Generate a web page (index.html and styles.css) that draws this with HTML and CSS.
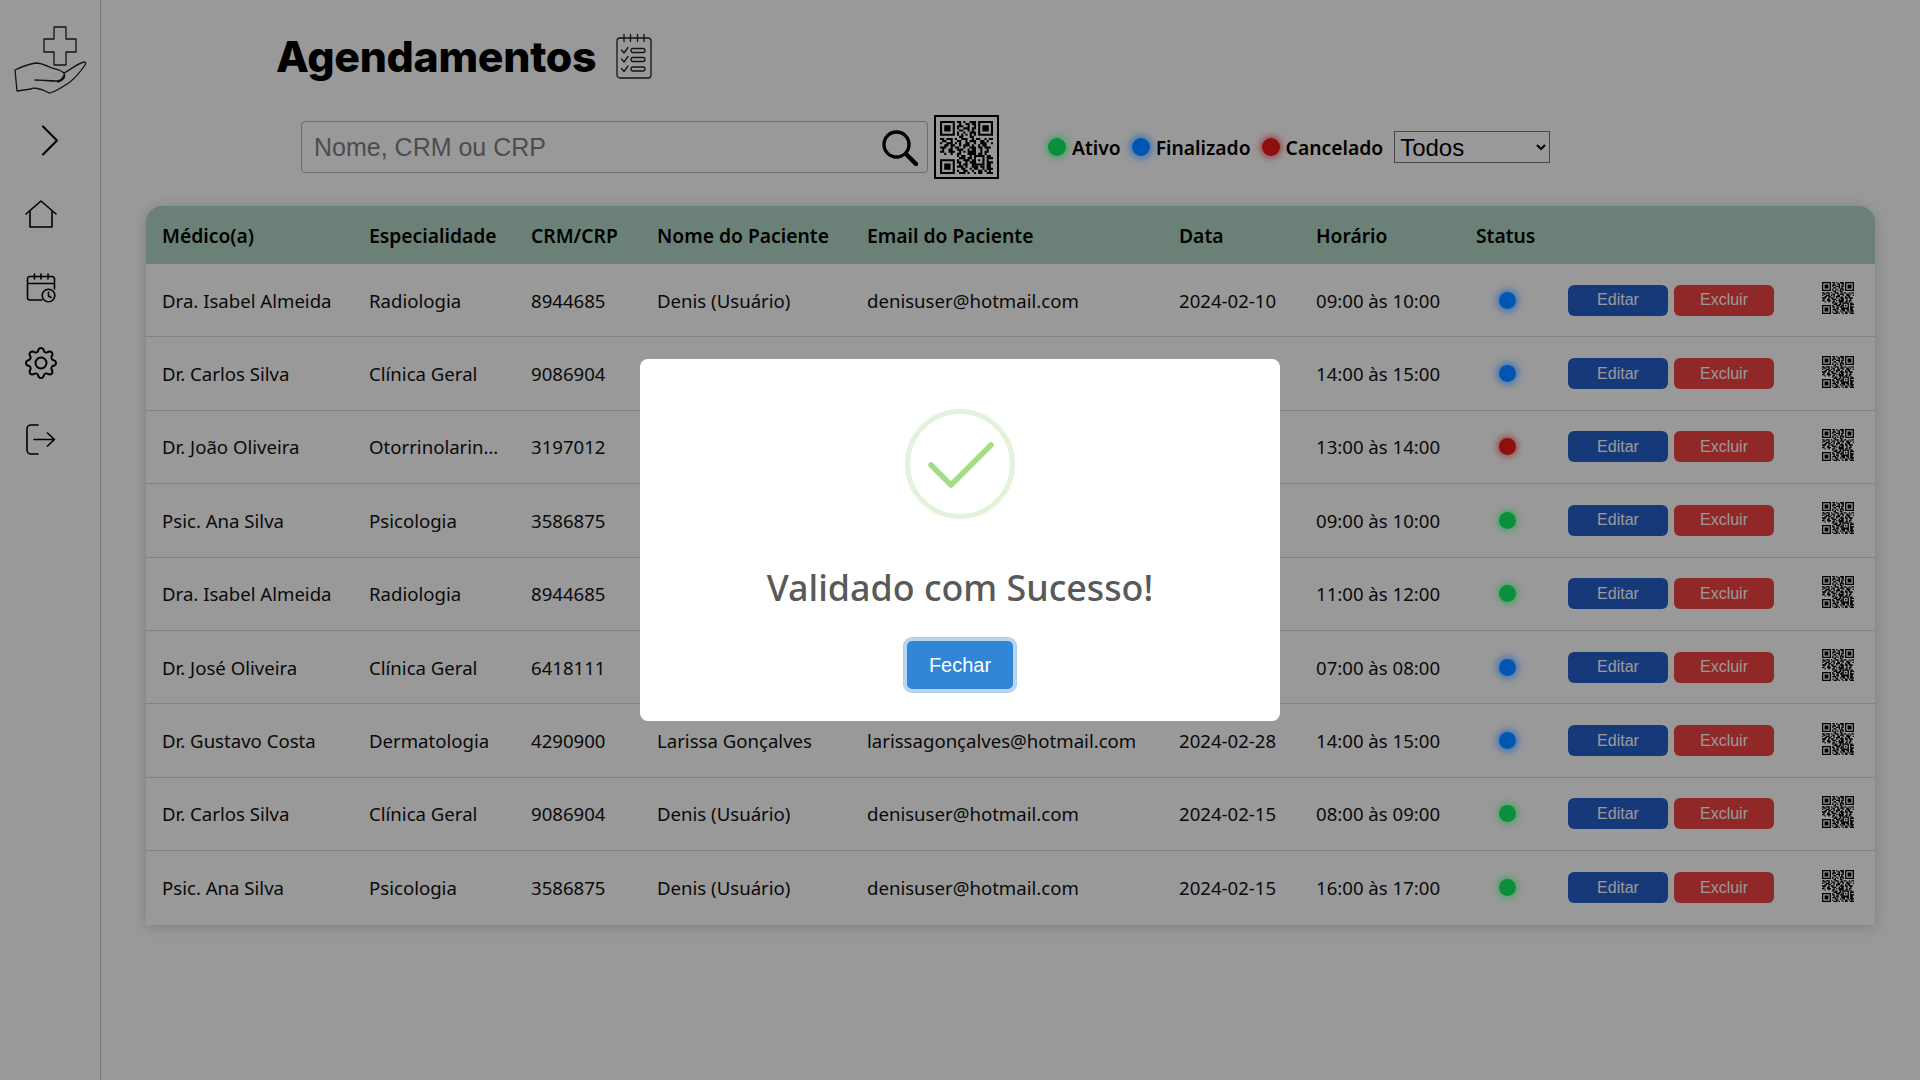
FILE: index.html
```html
<!DOCTYPE html>
<html lang="pt-BR">
<head>
<meta charset="utf-8">
<title>Agendamentos</title>
<link rel="stylesheet" href="styles.css">
</head>
<body>
<svg class="defs" width="0" height="0" aria-hidden="true">
  <symbol id="qr" viewBox="0 0 25 25">
    <path fill="#000" fill-rule="evenodd" d="M0 0h7v7H0zM1 1v5h5V1zM2 2h3v3H2zM18 0h7v7h-7zM19 1v5h5V1zM20 2h3v3h-3zM0 18h7v7H0zM1 19v5h5v-5zM2 20h3v3H2zM16 16h5v5h-5zM17 17v3h3v-3zM18 18h1v1h-1z"/>
    <path fill="none" stroke="#000" stroke-width="1" d="M8 .5h2m1 0h1m2 0h3M9 1.5h1m2 0h2m1 0h2M8 2.5h3m2 0h1m2 0h1M8 3.5h1m2 0h3m1 0h2M9 4.5h2m2 0h1m1 0h1M8 5.5h1m2 0h1m2 0h3M8 6.5h1m1 0h1m1 0h1m1 0h1m1 0h1M9 7.5h2m3 0h2M0 8.5h2m1 0h3m1 0h1m2 0h3m2 0h1m1 0h2m2 0h1m1 0h2M1 9.5h2m2 0h1m2 0h2m2 0h1m1 0h3m2 0h2m1 0h1M0 10.5h1m2 0h3m1 0h1m1 0h1m2 0h2m2 0h1m2 0h3m2 0h1M2 11.5h2m1 0h2m2 0h1m1 0h3m1 0h1m2 0h1m1 0h2M0 12.5h3m2 0h1m1 0h2m2 0h1m2 0h3m1 0h2m1 0h3M1 13.5h1m2 0h2m2 0h3m2 0h1m1 0h2m2 0h1m2 0h1M0 14.5h2m2 0h3m2 0h1m1 0h1m1 0h4m2 0h1m1 0h2M2 15.5h1m2 0h1m2 0h2m3 0h4m1 0h2m1 0h1M8 16.5h1m1 0h2m2 0h1m7 0h2M9 17.5h3m1 0h2m7 0h3M8 18.5h1m2 0h3m1 0h1m6 0h1M8 19.5h2m2 0h1m1 0h2m6 0h3M9 20.5h1m1 0h2m2 0h1m6 0h2M8 21.5h3m1 0h1m2 0h3m1 0h2m1 0h2M10 22.5h2m2 0h1m1 0h2m2 0h1m1 0h3M8 23.5h1m2 0h2m2 0h1m2 0h2m1 0h1m1 0h1M9 24.5h3m1 0h1m2 0h1m1 0h2m2 0h3"/>
  </symbol>
</svg>

<div class="app">
  <aside class="sidebar">
    <svg class="logo" width="76" height="68" viewBox="0 0 76 68" fill="none" stroke="#222" stroke-width="1.300" stroke-linejoin="round" stroke-linecap="round">
      <path d="M41 1h12v12h10v13H53v13H41V26H31V13h10z"/>
      <path d="M2 44C8 41 16 38 23 37c6 0 11 3 16 5 4 1 9 2 12 5 6-3 14-10 20-11 2 0 2 2 1 3-4 6-9 12-15 17-6 4-13 9-20 11-2 0-3-1-5-2-4-2-12-4-14-2L4 65z"/>
      <path d="M22 54c7 0 14 1 21 1 4 0 7-3 8-6M51 47c2 4-1 8-6 9"/>
    </svg>
    <svg class="chevron" width="18" height="31" viewBox="0 0 18 31" fill="none" stroke="#000" stroke-width="2" stroke-linecap="round" stroke-linejoin="round"><path d="M2 1.500 16 15.500 2 29.500"/></svg>
    <nav class="nav">
      <svg width="32" height="28" viewBox="0 0 32 28" fill="none" stroke="#000" stroke-width="1.600" stroke-linecap="round" stroke-linejoin="round"><path d="M1 14 16 1l15 13M5 11v16h22V11"/></svg>
      <svg width="30" height="30" viewBox="0 0 30 30" fill="none" stroke="#000" stroke-width="1.600" stroke-linecap="round" stroke-linejoin="round"><path d="M16 27H4a2.500 2.500 0 0 1-2.500-2.500V6A2.500 2.500 0 0 1 4 3.500h22A2.500 2.500 0 0 1 28.500 6v10M1.500 10.500h27M8.500 1v5M15 1v5M22 1v5"/><circle cx="22.500" cy="22.500" r="6.300"/><path d="M22.500 19v4l2.500 1.500"/></svg>
      <svg width="32" height="32" viewBox="0 0 16 16" fill="#000"><path d="M8 4.754a3.246 3.246 0 1 0 0 6.492 3.246 3.246 0 0 0 0-6.492zM5.754 8a2.246 2.246 0 1 1 4.492 0 2.246 2.246 0 0 1-4.492 0z"/><path d="M9.796 1.343c-.527-1.790-3.065-1.790-3.592 0l-.094.319a.873.873 0 0 1-1.255.52l-.292-.16c-1.640-.892-3.433.902-2.540 2.541l.159.292a.873.873 0 0 1-.52 1.255l-.319.094c-1.790.527-1.790 3.065 0 3.592l.319.094a.873.873 0 0 1 .52 1.255l-.16.292c-.892 1.640.901 3.434 2.541 2.540l.292-.159a.873.873 0 0 1 1.255.52l.094.319c.527 1.790 3.065 1.790 3.592 0l.094-.319a.873.873 0 0 1 1.255-.52l.292.16c1.640.893 3.434-.902 2.540-2.541l-.159-.292a.873.873 0 0 1 .52-1.255l.319-.094c1.790-.527 1.790-3.065 0-3.592l-.319-.094a.873.873 0 0 1-.52-1.255l.16-.292c.893-1.640-.902-3.433-2.541-2.540l-.292.159a.873.873 0 0 1-1.255-.52l-.094-.319zm-2.633.283c.246-.835 1.428-.835 1.674 0l.094.319a1.873 1.873 0 0 0 2.693 1.115l.291-.16c.764-.415 1.600.42 1.184 1.185l-.159.292a1.873 1.873 0 0 0 1.116 2.692l.318.094c.835.246.835 1.428 0 1.674l-.319.094a1.873 1.873 0 0 0-1.115 2.693l.16.291c.415.764-.42 1.600-1.185 1.184l-.291-.159a1.873 1.873 0 0 0-2.693 1.116l-.094.318c-.246.835-1.428.835-1.674 0l-.094-.319a1.873 1.873 0 0 0-2.692-1.115l-.292.16c-.764.415-1.600-.42-1.184-1.185l.159-.291A1.873 1.873 0 0 0 1.945 8.930l-.319-.094c-.835-.246-.835-1.428 0-1.674l.319-.094A1.873 1.873 0 0 0 3.060 4.377l-.16-.292c-.415-.764.42-1.600 1.185-1.184l.292.159a1.873 1.873 0 0 0 2.692-1.115l.094-.319z"/></svg>
      <svg width="30" height="31" viewBox="0 0 30 31" fill="none" stroke="#000" stroke-width="1.600" stroke-linecap="round" stroke-linejoin="round"><path d="M12 1H5a4 4 0 0 0-4 4v21a4 4 0 0 0 4 4h7M8 15.500h20.500M21.500 9l7 6.500-7 6.500"/></svg>
    </nav>
  </aside>

  <main class="main">
    <header class="title-row">
      <h1 class="title">Agendamentos</h1>
      <svg class="title-icon" width="36" height="46" viewBox="0 0 36 46" fill="none" stroke="#222" stroke-width="1.300" stroke-linecap="round" stroke-linejoin="round"><rect x="1" y="5" width="34" height="40" rx="3"/><path d="M8 1.500v7M14.500 1.500v7M21.500 1.500v7M28 1.500v7M5.500 17l2.500 3 4-5.500M5.500 26l2.500 3 4-5.500M5.500 35.500l2.500 3 4-5.500"/><rect x="15" y="15.500" width="14" height="4" rx="2"/><rect x="15" y="24.500" width="14" height="4" rx="2"/><rect x="15" y="34" width="14" height="4" rx="2"/></svg>
    </header>

    <section class="toolbar">
      <div class="search">
        <input class="search-input" type="text" placeholder="Nome, CRM ou CRP">
        <svg class="search-icon" width="36" height="36" viewBox="0 0 36 36" fill="none" stroke="#000" stroke-linecap="round"><circle cx="14.500" cy="14.500" r="12.500" stroke-width="3.400"/><path d="M24 24l10 10" stroke-width="4.400"/></svg>
      </div>
      <div class="qr-box"><svg width="53" height="53"><use href="#qr"/></svg></div>
      <div class="legend">
        <span class="legend-item"><i class="dot green"></i>Ativo</span>
        <span class="legend-item"><i class="dot blue"></i>Finalizado</span>
        <span class="legend-item"><i class="dot red"></i>Cancelado</span>
      </div>
      <select class="filter"><option>Todos</option></select>
    </section>

    <div class="table-card">
      <table class="table">
        <colgroup>
          <col class="c1"><col class="c2"><col class="c3"><col class="c4"><col class="c5">
          <col class="c6"><col class="c7"><col class="c8"><col class="c9"><col class="c10">
        </colgroup>
        <thead>
          <tr><th>Médico(a)</th><th>Especialidade</th><th>CRM/CRP</th><th>Nome do Paciente</th><th>Email do Paciente</th><th>Data</th><th>Horário</th><th>Status</th><th></th><th></th></tr>
        </thead>
        <tbody>
          <tr><td>Dra. Isabel Almeida</td><td>Radiologia</td><td>8944685</td><td>Denis (Usuário)</td><td>denisuser@hotmail.com</td><td>2024-02-10</td><td>09:00 às 10:00</td><td class="st"><i class="dot blue"></i></td><td class="act"><button class="btn edit">Editar</button><button class="btn del">Excluir</button></td><td class="q"><svg width="32" height="32"><use href="#qr"/></svg></td></tr>
          <tr><td>Dr. Carlos Silva</td><td>Clínica Geral</td><td>9086904</td><td>Denis (Usuário)</td><td>denisuser@hotmail.com</td><td>2024-02-12</td><td>14:00 às 15:00</td><td class="st"><i class="dot blue"></i></td><td class="act"><button class="btn edit">Editar</button><button class="btn del">Excluir</button></td><td class="q"><svg width="32" height="32"><use href="#qr"/></svg></td></tr>
          <tr><td>Dr. João Oliveira</td><td class="clip">Otorrinolaringologia</td><td>3197012</td><td>Denis (Usuário)</td><td>denisuser@hotmail.com</td><td>2024-02-14</td><td>13:00 às 14:00</td><td class="st"><i class="dot red"></i></td><td class="act"><button class="btn edit">Editar</button><button class="btn del">Excluir</button></td><td class="q"><svg width="32" height="32"><use href="#qr"/></svg></td></tr>
          <tr><td>Psic. Ana Silva</td><td>Psicologia</td><td>3586875</td><td>Denis (Usuário)</td><td>denisuser@hotmail.com</td><td>2024-02-15</td><td>09:00 às 10:00</td><td class="st"><i class="dot green"></i></td><td class="act"><button class="btn edit">Editar</button><button class="btn del">Excluir</button></td><td class="q"><svg width="32" height="32"><use href="#qr"/></svg></td></tr>
          <tr><td>Dra. Isabel Almeida</td><td>Radiologia</td><td>8944685</td><td>Denis (Usuário)</td><td>denisuser@hotmail.com</td><td>2024-02-15</td><td>11:00 às 12:00</td><td class="st"><i class="dot green"></i></td><td class="act"><button class="btn edit">Editar</button><button class="btn del">Excluir</button></td><td class="q"><svg width="32" height="32"><use href="#qr"/></svg></td></tr>
          <tr><td>Dr. José Oliveira</td><td>Clínica Geral</td><td>6418111</td><td>Denis (Usuário)</td><td>denisuser@hotmail.com</td><td>2024-02-20</td><td>07:00 às 08:00</td><td class="st"><i class="dot blue"></i></td><td class="act"><button class="btn edit">Editar</button><button class="btn del">Excluir</button></td><td class="q"><svg width="32" height="32"><use href="#qr"/></svg></td></tr>
          <tr><td>Dr. Gustavo Costa</td><td>Dermatologia</td><td>4290900</td><td>Larissa Gonçalves</td><td>larissagonçalves@hotmail.com</td><td>2024-02-28</td><td>14:00 às 15:00</td><td class="st"><i class="dot blue"></i></td><td class="act"><button class="btn edit">Editar</button><button class="btn del">Excluir</button></td><td class="q"><svg width="32" height="32"><use href="#qr"/></svg></td></tr>
          <tr><td>Dr. Carlos Silva</td><td>Clínica Geral</td><td>9086904</td><td>Denis (Usuário)</td><td>denisuser@hotmail.com</td><td>2024-02-15</td><td>08:00 às 09:00</td><td class="st"><i class="dot green"></i></td><td class="act"><button class="btn edit">Editar</button><button class="btn del">Excluir</button></td><td class="q"><svg width="32" height="32"><use href="#qr"/></svg></td></tr>
          <tr><td>Psic. Ana Silva</td><td>Psicologia</td><td>3586875</td><td>Denis (Usuário)</td><td>denisuser@hotmail.com</td><td>2024-02-15</td><td>16:00 às 17:00</td><td class="st"><i class="dot green"></i></td><td class="act"><button class="btn edit">Editar</button><button class="btn del">Excluir</button></td><td class="q"><svg width="32" height="32"><use href="#qr"/></svg></td></tr>
        </tbody>
      </table>
    </div>
  </main>
</div>

<div class="overlay">
  <div class="modal">
    <div class="success-icon">
      <svg width="110" height="110" viewBox="0 0 110 110" fill="none"><circle cx="55" cy="55" r="52.500" stroke="#e3f3d9" stroke-width="5"/><path d="M26 56l20 20 40-40" stroke="#a5dc86" stroke-width="5.500" stroke-linecap="round" stroke-linejoin="round"/></svg>
    </div>
    <h2 class="modal-title">Validado com Sucesso!</h2>
    <button class="modal-btn">Fechar</button>
  </div>
</div>
</body>
</html>
```
FILE: styles.css
```css
* { box-sizing: border-box; }
html, body { margin: 0; height: 100%; }
body { background: #fff; font-family: "Noto Sans", "Open Sans", sans-serif; color: #000; overflow: hidden; }
.defs { position: absolute; }
.app { display: flex; min-height: 1080px; }

.sidebar { width: 101px; flex: none; border-right: 1px solid #c4c4c4; display: flex; flex-direction: column; align-items: center; padding-top: 26px; }
.logo { margin-left: 2px; }
.chevron { margin-top: 31px; margin-right: 0; }
.nav { display: flex; flex-direction: column; align-items: center; gap: 44.500px; margin-top: 44px; margin-right: 19px; }
.nav svg { display: block; }

.main { flex: 1; min-width: 0; padding: 0 45px; }
.title-row { display: flex; align-items: center; gap: 20px; height: 115px; padding: 0 0 3px 130px; }
.title { margin: 0; font-family: Inter, sans-serif; font-weight: 800; font-size: 42.800px; letter-spacing: -.3px; }
.title-icon { display: block; }

.toolbar { display: flex; align-items: center; height: 64px; padding-left: 155px; }
.search { position: relative; width: 627px; height: 52px; }
.search-input { width: 100%; height: 100%; border: 1px solid #b5b5b5; border-radius: 4px; padding: 0 60px 0 12px; font-family: "Liberation Sans", Arial, sans-serif; font-size: 25px; background: #fff; color: #000; }
.search-input::placeholder { color: #808080; opacity: 1; }
.search-icon { position: absolute; right: 10px; top: 9px; }
.qr-box { width: 65px; height: 64px; margin-left: 6px; border: 2px solid #000; display: flex; align-items: center; justify-content: center; flex: none; }
.qr-box svg { display: block; }
.legend { display: flex; margin-left: 49px; gap: 11px; font-weight: 600; font-size: 19.300px; }
.legend-item { display: flex; align-items: center; gap: 6px; }

.dot { display: inline-block; width: 18px; height: 18px; border-radius: 50%; position: relative; z-index: 11; }
.dot.green { background: #0a8f3c; box-shadow: 0 0 6px 2px rgba(20,170,70,.6); }
.dot.blue { background: #0056b0; box-shadow: 0 0 6px 3px rgba(0,90,200,.5); }
.dot.red { background: #8f0f0f; box-shadow: 0 0 6px 2px rgba(150,20,20,.6); }

.filter { width: 156px; height: 32px; margin-left: 11px; font-family: "Liberation Sans", Arial, sans-serif; font-size: 24px; background: #fff; color: #000; padding: 0 0 0 1px; }

.table-card { margin-top: 27px; width: 1729px; border-radius: 16px 16px 0 0; box-shadow: 0 2px 14px rgba(0,0,0,.18); }
.table { width: 100%; table-layout: fixed; border-collapse: separate; border-spacing: 0; font-size: 18.600px; }
.c1 { width: 207px; } .c2 { width: 162px; } .c3 { width: 126px; } .c4 { width: 210px; } .c5 { width: 312px; }
.c6 { width: 137px; } .c7 { width: 160px; } .c8 { width: 92px; } .c9 { width: 238px; } .c10 { width: 85px; }
.table th { height: 58px; padding: 0 16px; background: #b2d8c6; text-align: left; font-weight: 600; font-size: 19.300px; white-space: nowrap; }
.table th:first-child { border-top-left-radius: 16px; }
.table th:last-child { border-top-right-radius: 16px; }
.table td { height: 73.400px; padding: 0 16px; border-bottom: 1px solid #d9d9d9; white-space: nowrap; color: #111; }
.table tr:last-child td { border-bottom: 0; }
.table td.clip { overflow: hidden; text-overflow: ellipsis; }
.table td.st { padding: 0 0 0 39px; }
.table td.st .dot { display: block; width: 17px; height: 17px; }
.table td.act { padding: 0 0 0 16px; }
.table td.q { padding: 0 0 0 32px; }
.table td.q svg { display: block; transform: translateY(-2px); }

.btn { width: 100px; height: 31px; border: 0; border-radius: 6px; font-family: "Liberation Sans", Arial, sans-serif; font-size: 16px; color: #fff; padding: 0; vertical-align: middle; }
.btn.edit { background: #2660cc; margin-right: 6px; }
.btn.del { background: #f04343; }

.overlay { position: fixed; inset: 0; z-index: 10; background: rgba(0,0,0,.4); display: flex; align-items: center; justify-content: center; }
.modal { width: 640px; height: 362px; background: #fff; border-radius: 8px; padding-top: 50px; display: flex; flex-direction: column; align-items: center; position: relative; z-index: 12; }
.success-icon svg { display: block; }
.modal-title { margin: 45px 0 0; height: 46px; line-height: 46px; font-size: 35.800px; font-weight: 500; color: #595959; white-space: nowrap; }
.modal-btn { width: 106px; height: 48px; margin-top: 31px; border: 0; border-radius: 5px; background: #3085d6; color: #fff; font-family: "Liberation Sans", Arial, sans-serif; font-size: 20px; box-shadow: 0 0 0 3px #fff, 0 0 0 4px rgba(48,133,214,.4); outline: 3px solid rgba(48,133,214,.35); }
```
